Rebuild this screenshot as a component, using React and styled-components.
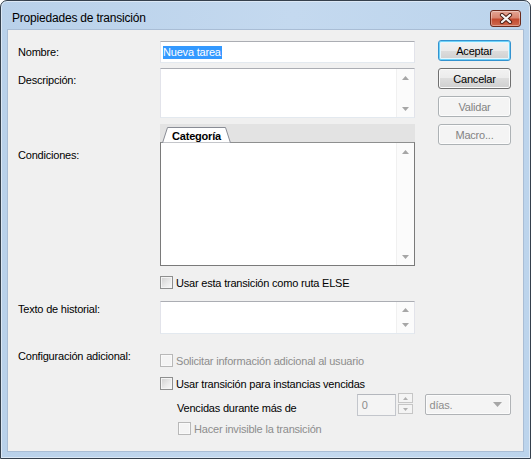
import React from "react";
import styled, { createGlobalStyle, css } from "styled-components";

const GlobalStyle = createGlobalStyle`
  html, body {
    margin: 0;
    padding: 0;
    background: #ffffff;
  }
  body {
    font-family: "Liberation Sans", Arial, sans-serif;
    font-size: 11px;
    letter-spacing: -0.2px;
    color: #000000;
  }
`;

const Window = styled.div`
  width: 531px;
  height: 459px;
  box-sizing: border-box;
  border: 1px solid #35404d;
  border-radius: 7px 7px 0 0;
  background: linear-gradient(to right, #b9d1ea 0%, #c4d9ef 55%, #bcd4ec 100%);
  box-shadow: inset 0 0 0 1px #dce8f5;
  padding: 0 7px 7px 7px;
  display: flex;
  flex-direction: column;
`;

const TitleBar = styled.div`
  height: 29px;
  display: flex;
  align-items: flex-start;
  justify-content: space-between;
`;

const Title = styled.div`
  font-size: 12px;
  line-height: 14px;
  margin: 10px 0 0 4px;
`;

const CloseButton = styled.div`
  width: 31px;
  height: 17px;
  box-sizing: border-box;
  margin: 9px 2px 0 0;
  border: 1px solid #6b2a1c;
  border-radius: 3px;
  background: linear-gradient(#e3a595 0%, #d88570 45%, #c24a2f 55%, #cf6a4f 100%);
  box-shadow: inset 0 0 0 1px rgba(255, 255, 255, 0.35);
  display: flex;
  align-items: center;
  justify-content: center;
`;

const Client = styled.div`
  height: 421px;
  box-sizing: border-box;
  background: #f0f0f0;
  box-shadow: 0 0 0 1px #a9bdd5;
  padding: 11px 0 0 10px;
  display: grid;
  grid-template-columns: 142px 255px 96px;
  align-content: start;
  align-items: start;
`;

const Label = styled.div`
  grid-column: 1;
  line-height: 14px;
  margin-top: ${(p) => p.$top || 0}px;
  align-self: ${(p) => (p.$center ? "center" : "start")};
`;

const Field = styled.div`
  grid-column: ${(p) => (p.$wide ? "2 / span 2" : "2")};
  margin-top: ${(p) => p.$top || 0}px;
`;

const ButtonColumn = styled.div`
  grid-column: 3;
  grid-row: 1 / span 4;
  justify-self: end;
  margin-top: -1px;
  display: flex;
  flex-direction: column;
  gap: 7px;
`;

const Button = styled.button`
  width: 73px;
  height: 21px;
  box-sizing: border-box;
  padding: 0;
  font: inherit;
  letter-spacing: inherit;
  color: #000000;
  border: 1px solid #707070;
  border-radius: 3px;
  background: linear-gradient(#f2f2f2 0%, #ebebeb 50%, #dddddd 50%, #cfcfcf 100%);
  box-shadow: inset 0 0 0 1px #fafafa;
  ${(p) =>
    p.$default &&
    css`
      border-color: #3393d0;
      box-shadow: inset 0 0 0 1px #6fd2f8, inset 0 0 0 2px #e4f6fd;
    `}
  ${(p) =>
    p.disabled &&
    css`
      border-color: #adb2b5;
      background: #f4f4f4;
      color: #838383;
      box-shadow: inset 0 0 0 1px #fcfcfc;
    `}
`;

const TextInput = styled.div`
  height: 22px;
  box-sizing: border-box;
  background: #ffffff;
  border: 1px solid #e2e3ea;
  border-top-color: #abadb3;
  border-bottom-color: #e3e9ef;
  padding-left: 2px;
  display: flex;
  align-items: center;
`;

const Selected = styled.span`
  background: #3399ff;
  color: #ffffff;
  line-height: 13px;
  padding-right: 1px;
`;

const ScrollBox = styled.div`
  height: ${(p) => p.$h}px;
  box-sizing: border-box;
  background: #ffffff;
  border: 1px solid #e2e3ea;
  border-top-color: #abadb3;
  border-bottom-color: #e3e9ef;
  display: flex;
  justify-content: flex-end;
`;

const ScrollTrack = styled.div`
  width: 17px;
  background: #fbfbfb;
  border-left: 1px solid #f0f0f0;
  display: flex;
  flex-direction: column;
  justify-content: space-between;
`;

const ArrowButton = styled.div`
  flex: 0 1 17px;
  min-height: 0;
  display: flex;
  align-items: center;
  justify-content: center;
`;

const Arrow = ({ down }) => (
  <svg width="7" height="4" viewBox="0 0 7 4">
    <polygon
      points={down ? "0,0 7,0 3.5,4" : "0,4 7,4 3.5,0"}
      fill="#a6a6a6"
    />
  </svg>
);

const Scroller = () => (
  <ScrollTrack>
    <ArrowButton>
      <Arrow />
    </ArrowButton>
    <ArrowButton>
      <Arrow down />
    </ArrowButton>
  </ScrollTrack>
);

const TabStrip = styled.div`
  height: 18px;
  background: #e3e3e3;
  display: flex;
  align-items: flex-end;
  padding-left: 2px;
`;

const Tab = styled.div`
  position: relative;
  z-index: 1;
  width: 69px;
  height: 16px;
  margin-bottom: -1px;
  font-weight: bold;
  display: flex;
  align-items: center;
  justify-content: center;
  padding-top: 1px;
  box-sizing: border-box;
`;

const TabShape = styled.svg`
  position: absolute;
  left: 0;
  top: 0;
  z-index: -1;
`;

const TabText = styled.span`
  line-height: 14px;
`;

const Panel = styled.div`
  height: 124px;
  box-sizing: border-box;
  background: #ffffff;
  border: 1px solid #7a7a7a;
  border-top-color: #8e8f8f;
  display: flex;
  justify-content: flex-end;
`;

const CheckRow = styled.label`
  height: 13px;
  display: flex;
  align-items: center;
  gap: 3px;
  margin-top: ${(p) => p.$top || 0}px;
  margin-left: ${(p) => p.$indent || 0}px;
  color: ${(p) => (p.$disabled ? "#8d8d8d" : "#000000")};
  line-height: 14px;
  white-space: nowrap;
`;

const Box = styled.span`
  width: 13px;
  height: 13px;
  box-sizing: border-box;
  flex: none;
  border: 1px solid ${(p) => (p.$disabled ? "#b8b8b8" : "#8e8f8f")};
  background: ${(p) =>
    p.$disabled
      ? "#f4f4f4"
      : "linear-gradient(135deg, #cfcfcf 0%, #e9e9e9 55%, #f9f9f9 100%)"};
  box-shadow: inset 0 0 0 1px ${(p) => (p.$disabled ? "#f9f9f9" : "#f4f4f4")};
`;

const Check = ({ children, disabled, top, indent }) => (
  <CheckRow $disabled={disabled} $top={top} $indent={indent}>
    <Box $disabled={disabled} />
    {children}
  </CheckRow>
);

const Options = styled.div`
  display: flex;
  flex-direction: column;
`;

const OverdueRow = styled.div`
  display: flex;
  align-items: flex-start;
  margin-top: 4px;
  height: 22px;
`;

const OverdueText = styled.span`
  width: 198px;
  padding-left: 17px;
  box-sizing: border-box;
  padding-top: 7px;
  line-height: 14px;
  white-space: nowrap;
`;

const NumberBox = styled.div`
  width: 39px;
  height: 22px;
  box-sizing: border-box;
  border: 1px solid #c3c6cc;
  border-top-color: #b4b7bd;
  background: #f4f4f4;
  color: #8d8d8d;
  padding: 3px 0 0 4px;
  line-height: 14px;
`;

const Spin = styled.div`
  width: 16px;
  margin-left: 2px;
  margin-top: -1px;
  display: flex;
  flex-direction: column;
  gap: 1px;
`;

const SpinHalf = styled.div`
  height: 10px;
  box-sizing: border-box;
  border: 1px solid #c6c6c6;
  background: #f4f4f4;
  display: flex;
  align-items: center;
  justify-content: center;
`;

const Combo = styled.div`
  width: 86px;
  height: 21px;
  margin-left: 12px;
  box-sizing: border-box;
  border: 1px solid #b0b3b6;
  border-radius: 2px;
  background: #f4f4f4;
  box-shadow: inset 0 0 0 1px #fbfbfb;
  color: #8d8d8d;
  display: flex;
  align-items: center;
  justify-content: space-between;
  padding: 0 8px 0 3px;
`;

const ComboArrow = () => (
  <svg width="9" height="5" viewBox="0 0 9 5">
    <polygon points="0,0 9,0 4.5,5" fill="#a6a6a6" />
  </svg>
);

const SmallArrow = ({ down }) => (
  <svg width="5" height="3" viewBox="0 0 5 3">
    <polygon points={down ? "0,0 5,0 2.5,3" : "0,3 5,3 2.5,0"} fill="#b0b0b0" />
  </svg>
);

const App = () => {
  return (
    <>
      <GlobalStyle />
      <Window>
        <TitleBar>
          <Title>Propiedades de transición</Title>
          <CloseButton>
            <svg width="14" height="11" viewBox="0 0 14 11">
              <path
                d="M3 2 L11 9 M11 2 L3 9"
                stroke="#4a1c12"
                strokeWidth="4.2"
                strokeLinecap="round"
              />
              <path
                d="M3 2 L11 9 M11 2 L3 9"
                stroke="#f4f4f4"
                strokeWidth="2.3"
                strokeLinecap="round"
              />
            </svg>
          </CloseButton>
        </TitleBar>
        <Client>
          <Label $center>Nombre:</Label>
          <Field>
            <TextInput>
              <Selected>Nueva tarea</Selected>
            </TextInput>
          </Field>
          <ButtonColumn>
            <Button $default>Aceptar</Button>
            <Button>Cancelar</Button>
            <Button disabled>Validar</Button>
            <Button disabled>Macro...</Button>
          </ButtonColumn>

          <Label $top={10}>Descripción:</Label>
          <Field $top={5}>
            <ScrollBox $h={50}>
              <Scroller />
            </ScrollBox>
          </Field>

          <Label $top={30}>Condiciones:</Label>
          <Field $top={6}>
            <TabStrip>
              <Tab>
                <TabShape width="69" height="16" viewBox="0 0 69 16">
                  <polygon
                    points="0.5,16 5.5,0.5 63.5,0.5 68.5,16"
                    fill="#ffffff"
                    stroke="#898c95"
                  />
                </TabShape>
                <TabText>Categoría</TabText>
              </Tab>
            </TabStrip>
            <Panel>
              <Scroller />
            </Panel>
          </Field>

          <Field $top={10}>
            <Check>Usar esta transición como ruta ELSE</Check>
          </Field>

          <Label $top={13}>Texto de historial:</Label>
          <Field $top={12}>
            <ScrollBox $h={33}>
              <Scroller />
            </ScrollBox>
          </Field>

          <Label $top={15}>Configuración adicional:</Label>
          <Field $wide $top={20}>
            <Options>
              <Check disabled>Solicitar información adicional al usuario</Check>
              <Check top={10}>Usar transición para instancias vencidas</Check>
              <OverdueRow>
                <OverdueText>Vencidas durante más de</OverdueText>
                <NumberBox>0</NumberBox>
                <Spin>
                  <SpinHalf>
                    <SmallArrow />
                  </SpinHalf>
                  <SpinHalf>
                    <SmallArrow down />
                  </SpinHalf>
                </Spin>
                <Combo>
                  <span>días.</span>
                  <ComboArrow />
                </Combo>
              </OverdueRow>
              <Check disabled top={6} indent={18}>
                Hacer invisible la transición
              </Check>
            </Options>
          </Field>
        </Client>
      </Window>
    </>
  );
};

export default App;
